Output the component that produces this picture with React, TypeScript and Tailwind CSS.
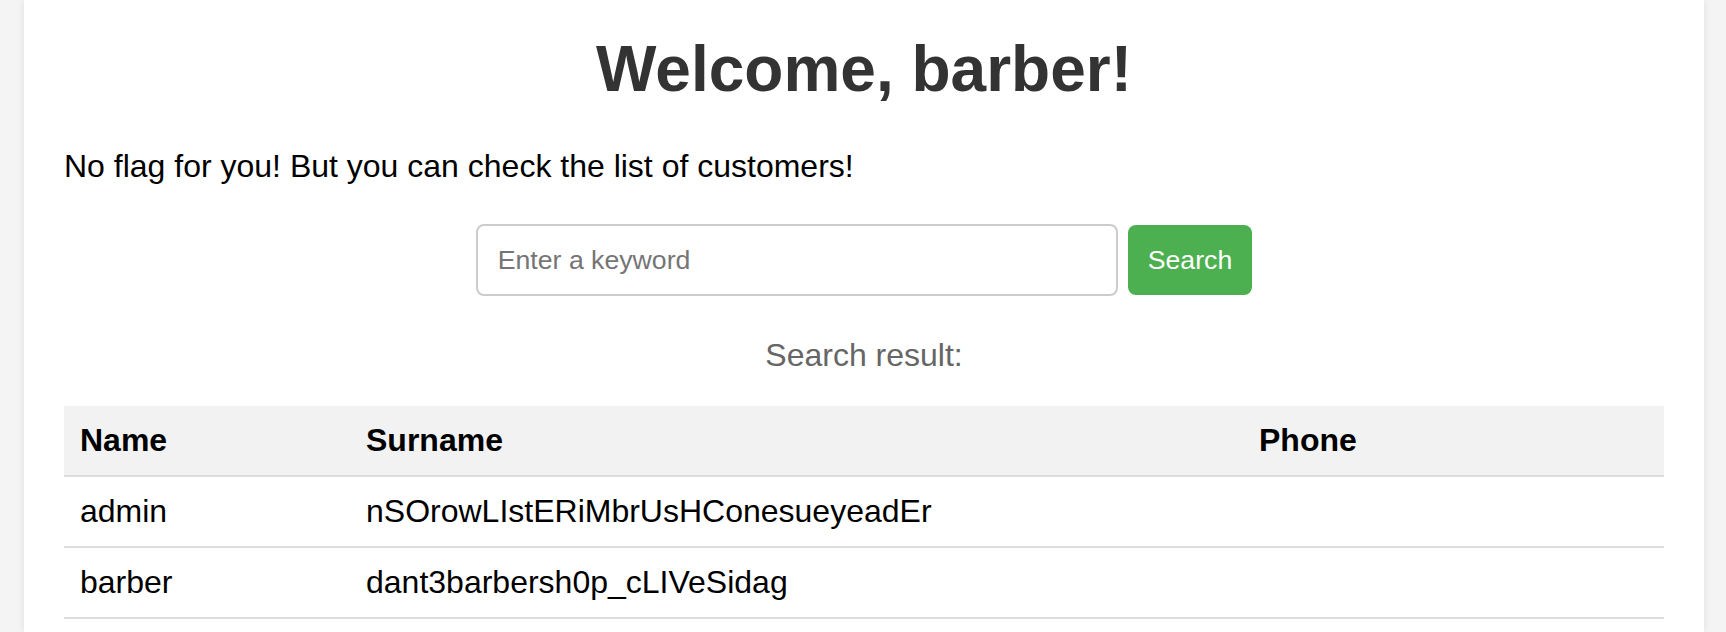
import { useState } from 'react';

interface Customer {
  name: string;
  surname: string;
  phone: string;
}

const customers: Customer[] = [
  { name: 'admin', surname: 'nSOrowLIstERiMbrUsHConesueyeadEr', phone: '' },
  { name: 'barber', surname: 'dant3barbersh0p_cLIVeSidag', phone: '' },
];

export default function App() {
  const [keyword, setKeyword] = useState('');

  return (
    <div className="min-h-screen bg-[#f4f4f4] font-['Liberation_Sans',Arial,sans-serif]">
      <div className="ml-[24px] w-[1680px] min-h-[632px] bg-white px-10 pt-[32px] shadow-[0_0_8px_rgba(0,0,0,0.08)]">
        {/* Header */}
        <h1 className="text-center text-[64px] leading-[74px] font-bold text-[#333]">Welcome, barber!</h1>
        <p className="mt-[42px] text-[32px] leading-[37px] text-black">
          No flag for you! But you can check the list of customers!
        </p>

        {/* Search form */}
        <form className="mt-[39px] flex items-center justify-center gap-[10px]" onSubmit={(e) => e.preventDefault()}>
          <input
            type="text"
            value={keyword}
            onChange={(e) => setKeyword(e.target.value)}
            placeholder="Enter a keyword"
            className="h-[72px] w-[642px] rounded-[8px] border-2 border-[#ccc] bg-white px-[20px] text-[26.67px] text-black outline-none placeholder:text-[#757575]"
          />
          <button
            type="submit"
            className="h-[70px] rounded-[8px] bg-[#4CAF50] px-[20px] text-[26.67px] text-white"
          >
            Search
          </button>
        </form>

        <p className="mt-[41px] text-center text-[32px] leading-[37px] text-[#666]">Search result:</p>

        {/* Results */}
        <table className="mt-[32px] w-full border-collapse text-[32px] leading-[37px] text-black">
          <thead>
            <tr className="bg-[#f2f2f2] border-b-2 border-[#ddd]">
              <th className="w-[286px] px-4 py-4 text-left font-bold">Name</th>
              <th className="w-[893px] px-4 py-4 text-left font-bold">Surname</th>
              <th className="px-4 py-4 text-left font-bold">Phone</th>
            </tr>
          </thead>
          <tbody>
            {customers.map((c) => (
              <tr key={c.name} className="border-b-2 border-[#ddd]">
                <td className="px-4 py-4">{c.name}</td>
                <td className="px-4 py-4">{c.surname}</td>
                <td className="px-4 py-4">{c.phone}</td>
              </tr>
            ))}
          </tbody>
        </table>
      </div>
    </div>
  );
}
